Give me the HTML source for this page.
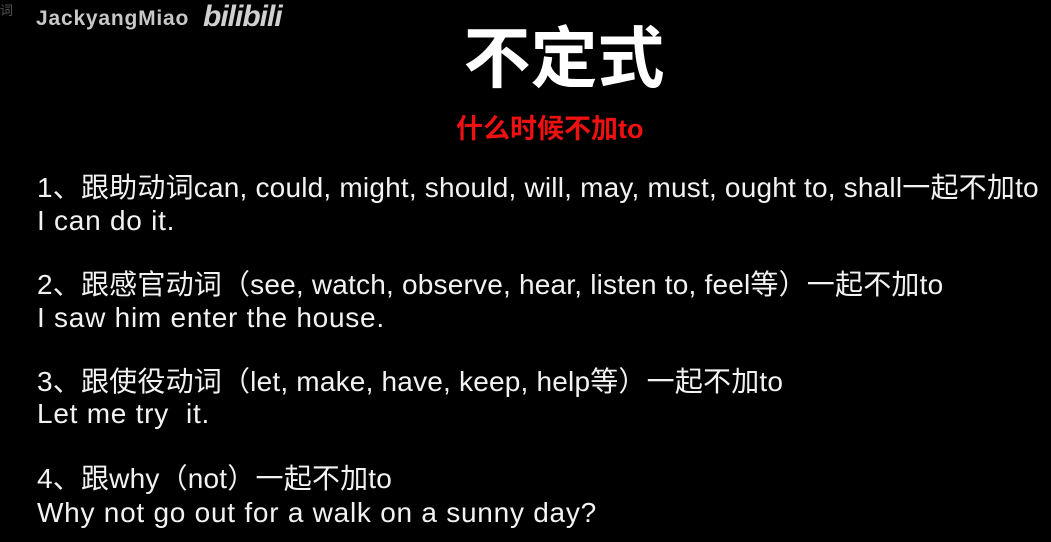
<!DOCTYPE html>
<html><head><meta charset="utf-8"><style>
html,body{margin:0;padding:0;background:#000;width:1051px;height:542px;overflow:hidden;position:relative;font-family:"Liberation Sans","Noto Sans CJK SC",sans-serif;}
.a{position:absolute;white-space:nowrap;}
.t{color:#f2f2f2;font-size:28px;letter-spacing:0.2px;line-height:33px;left:37px;}
.e{letter-spacing:0.75px;}
</style></head><body>
<div class="a" style="left:0;top:0;color:#555;font-size:13px;">词</div>
<div class="a" style="left:36px;top:7px;color:#c8c8c8;font-size:21px;font-weight:bold;letter-spacing:0.8px;">JackyangMiao</div>
<div class="a" style="left:203px;top:0px;color:#d0d0d0;font-size:30px;font-weight:bold;font-style:italic;letter-spacing:-1px;">bilibili</div>
<div class="a" style="left:0;width:1128px;text-align:center;top:22px;color:#fff;font-size:67px;font-weight:bold;line-height:76px;">不定式</div>
<div class="a" style="left:456px;top:112px;color:#ee1111;font-size:27px;font-weight:bold;line-height:34px;">什么时候不加to</div>
<div class="a t" style="top:171px;">1、跟助动词can, could, might, should, will, may, must, ought to, shall一起不加to</div>
<div class="a t e" style="top:204px;">I can do it.</div>
<div class="a t" style="top:268px;">2、跟感官动词（see, watch, observe, hear, listen to, feel等）一起不加to</div>
<div class="a t e" style="top:301px;">I saw him enter the house.</div>
<div class="a t" style="top:365px;">3、跟使役动词（let, make, have, keep, help等）一起不加to</div>
<div class="a t e" style="top:397px;">Let me try&nbsp; it.</div>
<div class="a t" style="top:462px;">4、跟why（not）一起不加to</div>
<div class="a t e" style="top:496px;">Why not go out for a walk on a sunny day?</div>
</body></html>
